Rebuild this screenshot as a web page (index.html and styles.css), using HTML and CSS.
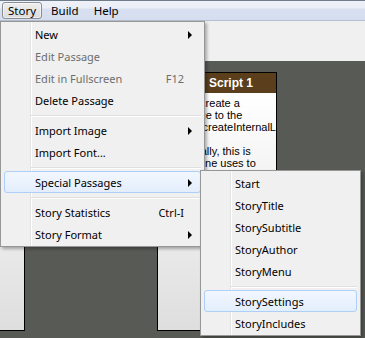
FILE: index.html
```html
<!DOCTYPE html>
<html>
<head>
<meta charset="utf-8">
<link rel="stylesheet" href="styles.css">
</head>
<body>
<div class="app">
  <div class="menubar">
    <div class="mb-item open">Story</div>
    <div class="mb-item">Build</div>
    <div class="mb-item">Help</div>
  </div>
  <div class="toolbar"></div>
  <div class="canvas">
    <div class="card card-left">
      <div class="card-title"></div>
      <div class="card-body"></div>
    </div>
    <div class="card card-script">
      <div class="card-title">Script 1</div>
      <div class="card-body">
        <div class="line">Macros create a</div>
        <div class="line">a passage to the</div>
        <div class="line">function createInternalLink</div>
        <div class="line">&nbsp;</div>
        <div class="line">Additionally, this is</div>
        <div class="line">lets anyone uses to</div>
      </div>
    </div>
  </div>

  <div class="menu main-menu">
    <div class="item"><span class="label">New</span><span class="arrow-cell"><span class="arrow"></span></span></div>
    <div class="item disabled"><span class="label">Edit Passage</span><span class="arrow-cell"></span></div>
    <div class="item disabled"><span class="label">Edit in Fullscreen</span><span class="shortcut">F12</span><span class="arrow-cell"></span></div>
    <div class="item"><span class="label">Delete Passage</span><span class="arrow-cell"></span></div>
    <div class="sep"></div>
    <div class="item"><span class="label">Import Image</span><span class="arrow-cell"><span class="arrow"></span></span></div>
    <div class="item"><span class="label">Import Font...</span><span class="arrow-cell"></span></div>
    <div class="sep"></div>
    <div class="item hot"><span class="label">Special Passages</span><span class="arrow-cell"><span class="arrow"></span></span></div>
    <div class="sep"></div>
    <div class="item"><span class="label">Story Statistics</span><span class="shortcut">Ctrl-I</span><span class="arrow-cell"></span></div>
    <div class="item"><span class="label">Story Format</span><span class="arrow-cell"><span class="arrow"></span></span></div>
  </div>

  <div class="menu sub-menu">
    <div class="item"><span class="label">Start</span></div>
    <div class="item"><span class="label">StoryTitle</span></div>
    <div class="item"><span class="label">StorySubtitle</span></div>
    <div class="item"><span class="label">StoryAuthor</span></div>
    <div class="item"><span class="label">StoryMenu</span></div>
    <div class="sep"></div>
    <div class="item hot"><span class="label">StorySettings</span></div>
    <div class="item"><span class="label">StoryIncludes</span></div>
  </div>
</div>
</body>
</html>
```
FILE: styles.css
```css
* { box-sizing: border-box; }
html, body { margin: 0; padding: 0; }
body {
  width: 365px;
  height: 338px;
  overflow: hidden;
  font-family: "Noto Sans", "Open Sans", sans-serif;
  font-size: 11px;
  color: #000;
}
.app {
  position: relative;
  width: 365px;
  height: 338px;
  display: flex;
  flex-direction: column;
  overflow: hidden;
}
.menubar {
  height: 21px;
  flex: none;
  display: flex;
  align-items: flex-start;
  gap: 3px;
  padding-left: 2px;
  border-top: 1px solid #6f7c8c;
  border-bottom: 1px solid #b7bfce;
  background: linear-gradient(#eef1f8 0px, #eaeef7 7px, #d8e0f0 8px, #d5def0 100%);
  font-size: 11.5px;
}
.mb-item {
  height: 17px;
  margin-top: 1px;
  padding: 0 5px;
  line-height: 16px;
  border: 1px solid transparent;
  border-radius: 3px;
}
.mb-item.open {
  border-color: #8a8d91;
  background: linear-gradient(#eeeeee, #dcdcdc);
  box-shadow: inset 0 0 0 1px rgba(255,255,255,0.5);
}
.toolbar {
  height: 40px;
  flex: none;
  background: #f0f0f0;
}
.canvas {
  flex: 1;
  position: relative;
  background: #585a55;
}
.card {
  position: absolute;
  top: 11px;
  height: 259px;
  border: 1px solid #000;
  display: flex;
  flex-direction: column;
  overflow: hidden;
}
.card-left { left: -100px; width: 125px; }
.card-script { left: 157px; width: 120px; }
.card-title {
  height: 20px;
  flex: none;
  background: #5b3f1d;
  color: #fff;
  font-family: "Liberation Sans", Arial, sans-serif;
  font-weight: bold;
  font-size: 12px;
  line-height: 20px;
  padding-left: 51px;
  white-space: nowrap;
}
.card-body {
  flex: 1;
  background: linear-gradient(#ffffff, #dedede);
  font-family: "Liberation Sans", Arial, sans-serif;
  font-size: 11px;
  line-height: 12px;
  padding: 4px 0 0 3px;
  overflow: hidden;
}
.line { white-space: nowrap; }

.menu {
  position: absolute;
  border: 1px solid #979797;
  padding: 1px 3px;
  background:
    linear-gradient(to right, transparent 29px, #e2e3e3 29px, #e2e3e3 30px, #ffffff 30px, #ffffff 31px, transparent 31px),
    #f0f0f0;
  box-shadow: 2px 2px 3px rgba(0,0,0,0.3);
}
.main-menu { left: 0; top: 21px; width: 205px; }
.sub-menu { left: 200px; top: 170px; width: 161px; }
.item {
  height: 22px;
  display: flex;
  align-items: center;
  padding-left: 30px;
  padding-top: 1px;
  border: 1px solid transparent;
  border-radius: 3px;
  white-space: nowrap;
}
.item .label { flex: 1; }
.arrow-cell {
  width: 16px;
  flex: none;
  display: flex;
  align-items: center;
  padding-left: 4px;
}
.arrow {
  width: 0;
  height: 0;
  border-top: 4px solid transparent;
  border-bottom: 4px solid transparent;
  border-left: 4px solid #000;
}
.item.disabled { color: #6d6d6d; }
.item.hot {
  border-color: #aecff7;
  background: linear-gradient(#f2f7fe, #e3eefc);
}
.sep {
  height: 8px;
  margin-left: 27px;
  padding-top: 4px;
}
.sep::before {
  content: "";
  display: block;
  height: 1px;
  background: #e0e0e0;
  border-bottom: 1px solid #fff;
  box-sizing: content-box;
}
```
